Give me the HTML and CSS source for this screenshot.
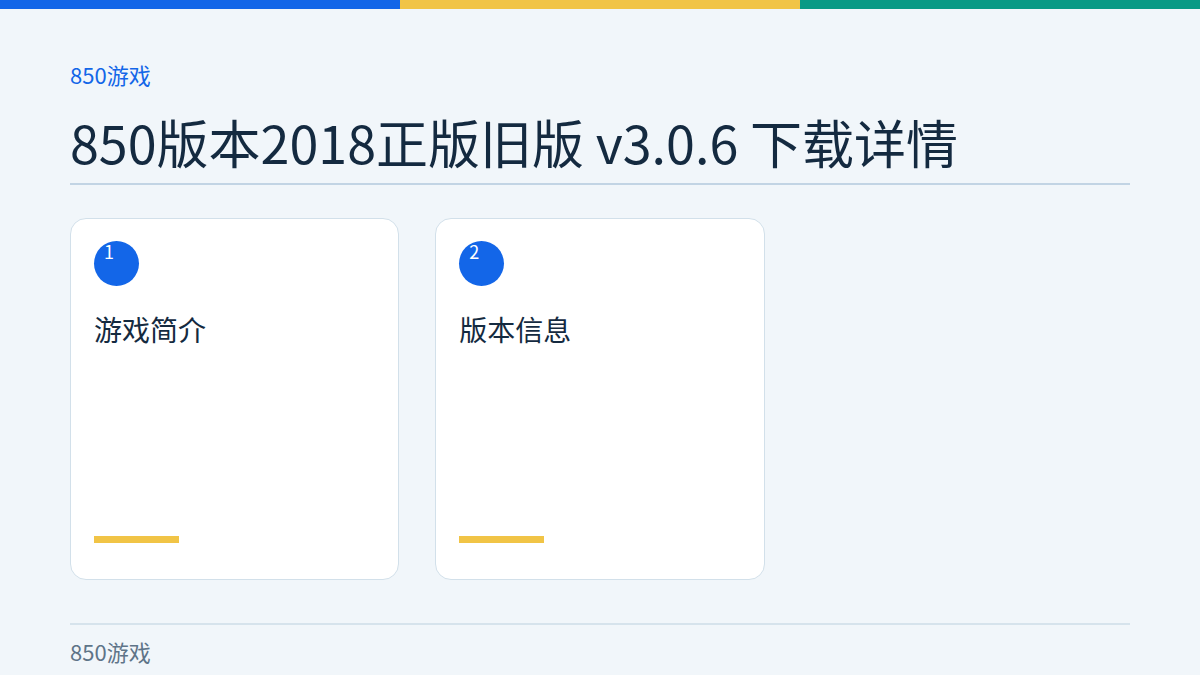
FILE: index.html
```html
<!DOCTYPE html>
<html lang="zh-CN">
<head>
    <meta charset="UTF-8">
    <meta name="viewport" content="width=device-width, initial-scale=1.0">
    <title>850版本2018正版旧版 v3.0.6 下载详情</title>
    <link rel="stylesheet" href="styles.css">
</head>
<body>
    <div class="topbar">
        <span class="bar-blue"></span>
        <span class="bar-yellow"></span>
        <span class="bar-teal"></span>
    </div>

    <div class="page">
        <div class="brand">850游戏</div>
        <h1 class="title">850版本2018正版旧版 v3.0.6 下载详情</h1>

        <div class="cards">
            <div class="card">
                <div class="num">1</div>
                <h2 class="card-title">游戏简介</h2>
                <div class="accent"></div>
            </div>
            <div class="card">
                <div class="num">2</div>
                <h2 class="card-title">版本信息</h2>
                <div class="accent"></div>
            </div>
        </div>

        <div class="footer">850游戏</div>
    </div>
</body>
</html>
```

FILE: styles.css
```css
body {
    font-family: "Noto Sans CJK SC", "Noto Sans", sans-serif;
    margin: 0;
    background-color: #f1f6fa;
    color: #142a40;
}
.topbar {
    display: flex;
    height: 9px;
}
.topbar span {
    flex: 1;
}
.bar-blue {
    background-color: #1366e8;
}
.bar-yellow {
    background-color: #f1c446;
}
.bar-teal {
    background-color: #089a85;
}
.page {
    padding: 50px 70px 0;
}
.brand {
    color: #1366e8;
    font-size: 22px;
    line-height: 30px;
}
.title {
    font-size: 52px;
    font-weight: 400;
    line-height: 72px;
    margin: 17px 0 0;
    padding-bottom: 5px;
    border-bottom: 2px solid #c2d4e4;
}
.cards {
    display: grid;
    grid-template-columns: repeat(3, 1fr);
    gap: 36px;
    margin-top: 33px;
}
.card {
    background: #fff;
    border: 1.5px solid #d2e0ea;
    border-radius: 16px;
    height: 362px;
    box-sizing: border-box;
    padding: 22px 23px 0;
    display: flex;
    flex-direction: column;
    align-items: flex-start;
}
.num {
    width: 45px;
    height: 45px;
    border-radius: 50%;
    background-color: #1366e8;
    color: #fff;
    font-size: 18px;
    line-height: 20px;
    padding-left: 10px;
    box-sizing: border-box;
}
.card-title {
    font-size: 28px;
    font-weight: 400;
    line-height: 36px;
    margin: 25px 0 0;
}
.accent {
    width: 85px;
    height: 7px;
    background-color: #f1c446;
    margin-top: auto;
    margin-bottom: 36px;
}
.footer {
    margin-top: 43px;
    border-top: 2px solid #d6e3ec;
    padding-top: 11px;
    color: #5e7488;
    font-size: 22px;
    line-height: 30px;
}
```
